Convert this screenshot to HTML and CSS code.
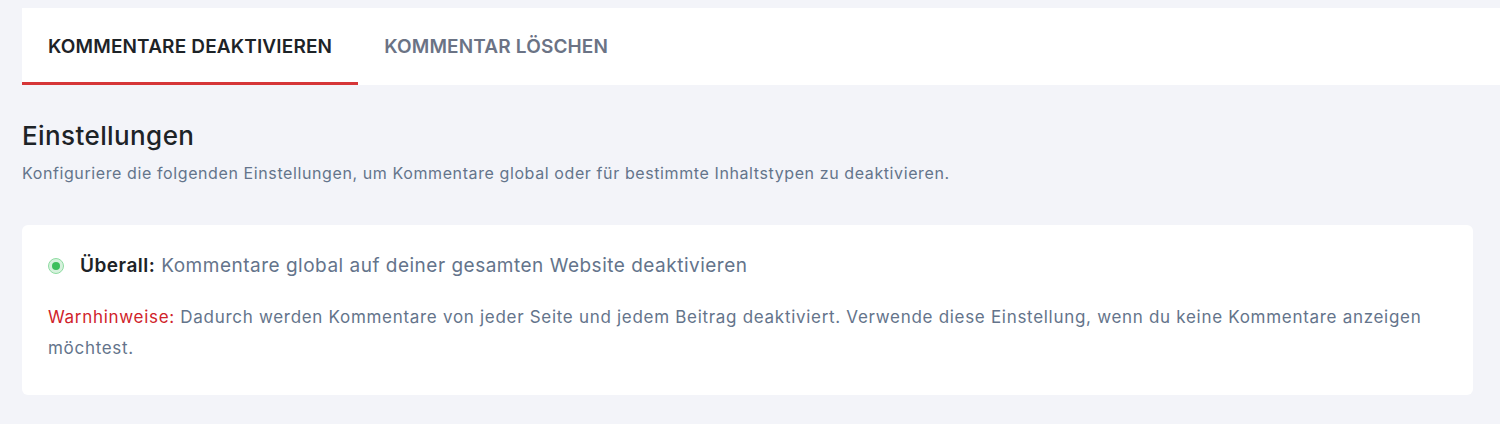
FILE: index.html
```html
<!DOCTYPE html>
<html lang="de">
<head>
<meta charset="utf-8">
<title>Kommentare</title>
<link rel="stylesheet" href="styles.css">
</head>
<body>
<div class="page">
  <nav class="tabs">
    <div class="tab active">KOMMENTARE DEAKTIVIEREN</div>
    <div class="tab">KOMMENTAR LÖSCHEN</div>
  </nav>
  <section class="settings">
    <h1 class="title">Einstellungen</h1>
    <p class="desc">Konfiguriere die folgenden Einstellungen, um Kommentare global oder für bestimmte Inhaltstypen zu deaktivieren.</p>
    <div class="card">
      <label class="option">
        <span class="radio"><span class="dot"></span></span>
        <span class="opt-label"><strong>Überall:</strong> Kommentare global auf deiner gesamten Website deaktivieren</span>
      </label>
      <p class="warning"><span class="warn">Warnhinweise:</span> Dadurch werden Kommentare von jeder Seite und jedem Beitrag deaktiviert. Verwende diese Einstellung, wenn du keine Kommentare anzeigen möchtest.</p>
    </div>
  </section>
</div>
</body>
</html>
```

FILE: styles.css
```css
html, body {
  margin: 0;
  padding: 0;
  background: #f3f4f9;
}
body {
  font-family: "Inter", "Liberation Sans", sans-serif;
  color: #1d2327;
}
.page {
  padding: 8px 0 0 22px;
}
.tabs {
  display: flex;
  background: #ffffff;
  height: 77px;
}
.tab {
  display: flex;
  align-items: center;
  padding: 3px 26px 0;
  font-size: 19px;
  font-weight: 600;
  letter-spacing: 0.15px;
  color: #6b7385;
  box-sizing: border-box;
  border-bottom: 3px solid transparent;
}
.tab.active {
  color: #1d2327;
  border-bottom-color: #d63638;
}
.settings {
  padding-right: 27px;
}
.title {
  margin: 34px 0 0;
  font-size: 26px;
  font-weight: 500;
  line-height: 34px;
  letter-spacing: 0.4px;
  color: #1d2327;
}
.desc {
  margin: 9px 0 0;
  font-size: 16px;
  line-height: 22px;
  letter-spacing: 0.6px;
  color: #64748b;
}
.card {
  margin-top: 41px;
  background: #ffffff;
  border-radius: 6px;
  padding: 28px 26px 31px;
}
.option {
  display: flex;
  align-items: center;
  gap: 16px;
  font-size: 19px;
  line-height: 26px;
  letter-spacing: 0.5px;
  color: #64748b;
}
.opt-label strong {
  font-weight: 600;
  color: #1d2327;
}
.radio {
  flex: none;
  width: 16px;
  height: 16px;
  border-radius: 50%;
  background: #d6f2dd;
  border: 1px solid #8fdca2;
  box-sizing: border-box;
  display: flex;
  align-items: center;
  justify-content: center;
}
.dot {
  width: 8px;
  height: 8px;
  border-radius: 50%;
  background: #3cbf5c;
}
.warning {
  margin: 23px 0 0;
  font-size: 17px;
  line-height: 31px;
  letter-spacing: 0.7px;
  color: #64748b;
}
.warn {
  color: #d0232a;
}
```
